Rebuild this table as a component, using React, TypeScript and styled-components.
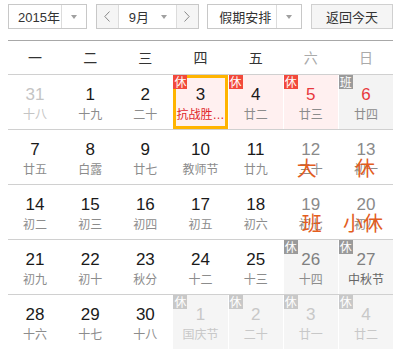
import React from 'react';
import styled, { createGlobalStyle, css } from 'styled-components';

const GlobalStyle = createGlobalStyle`
  body {
    margin: 0;
    background: #fff;
    font-family: "Liberation Sans", "Noto Sans CJK SC", sans-serif;
    color: #333;
  }
`;

const Wrapper = styled.div`
  width: 385px;
  margin-left: 8px;
  padding-top: 4px;
`;

// 상단 툴바
const Toolbar = styled.div`
  display: flex;
  justify-content: space-between;
  height: 25px;
  margin-bottom: 11px;
  font-size: 13px;
`;

const Select = styled.div<{ $width: number }>`
  display: flex;
  width: ${(p) => p.$width}px;
  height: 25px;
  box-sizing: border-box;
  border: 1px solid #c8c8c8;
  background: #fff;
`;

const SelectLabel = styled.div<{ $pad: number }>`
  flex: 1;
  display: flex;
  align-items: center;
  padding-left: ${(p) => p.$pad}px;
  color: #333;
`;

const CaretCell = styled.div`
  width: 24px;
  border-left: 1px solid #dcdcdc;
  display: flex;
  align-items: center;
  justify-content: center;
`;

const Caret = styled.span`
  width: 0;
  height: 0;
  border-left: 3px solid transparent;
  border-right: 3px solid transparent;
  border-top: 4px solid #a0a0a0;
`;

const ArrowButton = styled.div<{ $side: 'left' | 'right' }>`
  width: 21px;
  background: #f5f5f5;
  display: flex;
  align-items: center;
  justify-content: center;
  ${(p) =>
    p.$side === 'left'
      ? css`border-right: 1px solid #dcdcdc;`
      : css`border-left: 1px solid #dcdcdc;`}
`;

const MonthLabel = styled.div`
  flex: 1;
  display: flex;
  align-items: center;
  justify-content: space-between;
  padding: 0 9px 0 10px;
`;

const TodayButton = styled.div`
  width: 82px;
  height: 25px;
  box-sizing: border-box;
  border: 1px solid #d0d0d0;
  background: #f5f5f5;
  display: flex;
  align-items: center;
  justify-content: center;
  color: #333;
`;

// 요일 헤더
const WeekHeader = styled.div`
  display: grid;
  grid-template-columns: repeat(7, minmax(0, 1fr));
  column-gap: 1px;
  border-top: 1px solid #a8a8a8;
  height: 33px;
`;

const WeekDay = styled.div<{ $weekend?: boolean }>`
  text-align: center;
  line-height: 33px;
  font-size: 14px;
  font-family: "Noto Sans CJK SC", sans-serif;
  color: ${(p) => (p.$weekend ? '#aaa' : '#333')};
`;

const Week = styled.div`
  display: grid;
  grid-template-columns: repeat(7, minmax(0, 1fr));
  column-gap: 1px;
  border-top: 1px solid #d0d0d0;
`;

type Tone = 'normal' | 'muted' | 'weekend' | 'off' | 'faded';
type Bg = 'none' | 'pink' | 'gray' | 'light';

const bgColors: Record<Bg, string> = {
  none: '#fff',
  pink: '#fff0f0',
  gray: '#f3f3f3',
  light: '#f5f5f5',
};

const Cell = styled.div<{ $bg: Bg; $selected?: boolean }>`
  position: relative;
  min-width: 0;
  height: 54px;
  box-sizing: border-box;
  padding: 10px 3px 0;
  text-align: center;
  background: ${(p) => bgColors[p.$bg]};
  ${(p) => p.$selected && css`box-shadow: inset 0 0 0 3px #ffb400;`}
`;

const numColors: Record<Tone, string> = {
  normal: '#1a1a1a',
  muted: '#c4c4c4',
  weekend: '#8a8a8a',
  off: '#808080',
  faded: '#c8c8c8',
};

const DayNum = styled.div<{ $color: string }>`
  font-size: 17px;
  line-height: 20px;
  color: ${(p) => p.$color};
`;

const Lunar = styled.div<{ $color: string }>`
  margin-top: 2px;
  font-size: 12px;
  line-height: 16px;
  color: ${(p) => p.$color};
  white-space: nowrap;
  overflow: hidden;
  text-overflow: ellipsis;
`;

const Badge = styled.span<{ $color: string }>`
  position: absolute;
  top: 0;
  left: 0;
  width: 14px;
  height: 14px;
  background: ${(p) => p.$color};
  color: #fff;
  font-size: 12px;
  line-height: 14px;
  text-align: center;
  font-family: "Noto Sans CJK SC", sans-serif;
  z-index: 1;
`;

const Mark = styled.span<{ $shift: number }>`
  position: absolute;
  top: 28px;
  left: 50%;
  transform: translateX(calc(-50% + ${(p) => p.$shift}px));
  font-size: 20px;
  line-height: 20px;
  color: #e35d1e;
  white-space: nowrap;
  font-family: "Noto Sans CJK SC", sans-serif;
`;

type Day = {
  n: number;
  lunar: string;
  tone?: Tone;
  bg?: Bg;
  red?: boolean;
  lunarColor?: string;
  badge?: { text: string; color: string };
  mark?: { text: string; shift: number };
  selected?: boolean;
};

const RED_BADGE = '#f2493b';
const GRAY_BADGE = '#9a9a9a';
const LIGHT_BADGE = '#c8c8c8';

const weeks: Day[][] = [
  [
    { n: 31, lunar: '十八', tone: 'muted' },
    { n: 1, lunar: '十九' },
    { n: 2, lunar: '二十' },
    {
      n: 3,
      lunar: '抗战胜利纪念日',
      bg: 'pink',
      selected: true,
      lunarColor: '#e0262b',
      badge: { text: '休', color: RED_BADGE },
    },
    { n: 4, lunar: '廿二', bg: 'pink', badge: { text: '休', color: RED_BADGE } },
    { n: 5, lunar: '廿三', bg: 'pink', red: true, badge: { text: '休', color: RED_BADGE } },
    { n: 6, lunar: '廿四', bg: 'gray', red: true, badge: { text: '班', color: GRAY_BADGE } },
  ],
  [
    { n: 7, lunar: '廿五' },
    { n: 8, lunar: '白露' },
    { n: 9, lunar: '廿七' },
    { n: 10, lunar: '教师节' },
    { n: 11, lunar: '廿九' },
    { n: 12, lunar: '三十', tone: 'weekend', mark: { text: '大', shift: -4 } },
    { n: 13, lunar: '初一', tone: 'weekend', mark: { text: '休', shift: -1 } },
  ],
  [
    { n: 14, lunar: '初二' },
    { n: 15, lunar: '初三' },
    { n: 16, lunar: '初四' },
    { n: 17, lunar: '初五' },
    { n: 18, lunar: '初六' },
    { n: 19, lunar: '初七', tone: 'weekend', mark: { text: '班', shift: 1 } },
    { n: 20, lunar: '初八', tone: 'weekend', mark: { text: '小休', shift: -3 } },
  ],
  [
    { n: 21, lunar: '初九' },
    { n: 22, lunar: '初十' },
    { n: 23, lunar: '秋分' },
    { n: 24, lunar: '十二' },
    { n: 25, lunar: '十三' },
    { n: 26, lunar: '十四', tone: 'off', bg: 'light', badge: { text: '休', color: GRAY_BADGE } },
    {
      n: 27,
      lunar: '中秋节',
      tone: 'off',
      bg: 'light',
      lunarColor: '#666',
      badge: { text: '休', color: GRAY_BADGE },
    },
  ],
  [
    { n: 28, lunar: '十六' },
    { n: 29, lunar: '十七' },
    { n: 30, lunar: '十八' },
    { n: 1, lunar: '国庆节', tone: 'faded', bg: 'light', badge: { text: '休', color: LIGHT_BADGE } },
    { n: 2, lunar: '二十', tone: 'faded', bg: 'light', badge: { text: '休', color: LIGHT_BADGE } },
    { n: 3, lunar: '廿一', tone: 'faded', bg: 'light', badge: { text: '休', color: LIGHT_BADGE } },
    { n: 4, lunar: '廿二', tone: 'faded', bg: 'light', badge: { text: '休', color: LIGHT_BADGE } },
  ],
];

const lunarTone: Record<Tone, string> = {
  normal: '#8c8c8c',
  muted: '#c4c4c4',
  weekend: '#8c8c8c',
  off: '#8c8c8c',
  faded: '#c8c8c8',
};

const Chevron: React.FC<{ dir: 'left' | 'right' }> = ({ dir }) => (
  <svg width="6" height="11" viewBox="0 0 6 11">
    <polyline
      points={dir === 'left' ? '5.5,0.5 0.8,5.5 5.5,10.5' : '0.5,0.5 5.2,5.5 0.5,10.5'}
      fill="none"
      stroke="#888"
      strokeWidth="1"
    />
  </svg>
);

const DayCell: React.FC<{ day: Day }> = ({ day }) => {
  const tone = day.tone ?? 'normal';
  const numColor = day.red ? '#e8383d' : numColors[tone];
  return (
    <Cell $bg={day.bg ?? 'none'} $selected={day.selected}>
      {day.badge && <Badge $color={day.badge.color}>{day.badge.text}</Badge>}
      <DayNum $color={numColor}>{day.n}</DayNum>
      <Lunar $color={day.lunarColor ?? lunarTone[tone]}>{day.lunar}</Lunar>
      {day.mark && <Mark $shift={day.mark.shift}>{day.mark.text}</Mark>}
    </Cell>
  );
};

const weekNames = ['一', '二', '三', '四', '五', '六', '日'];

export default function App() {
  return (
    <>
      <GlobalStyle />
      <Wrapper>
        <Toolbar>
          <Select $width={79}>
            <SelectLabel $pad={9}>2015年</SelectLabel>
            <CaretCell>
              <Caret />
            </CaretCell>
          </Select>
          <Select $width={103}>
            <ArrowButton $side="left">
              <Chevron dir="left" />
            </ArrowButton>
            <MonthLabel>
              <span>9月</span>
              <Caret />
            </MonthLabel>
            <ArrowButton $side="right">
              <Chevron dir="right" />
            </ArrowButton>
          </Select>
          <Select $width={95}>
            <SelectLabel $pad={11}>假期安排</SelectLabel>
            <CaretCell>
              <Caret />
            </CaretCell>
          </Select>
          <TodayButton>返回今天</TodayButton>
        </Toolbar>
        <WeekHeader>
          {weekNames.map((w, i) => (
            <WeekDay key={w} $weekend={i >= 5}>
              {w}
            </WeekDay>
          ))}
        </WeekHeader>
        {weeks.map((week, wi) => (
          <Week key={wi}>
            {week.map((day, di) => (
              <DayCell key={di} day={day} />
            ))}
          </Week>
        ))}
      </Wrapper>
    </>
  );
}
